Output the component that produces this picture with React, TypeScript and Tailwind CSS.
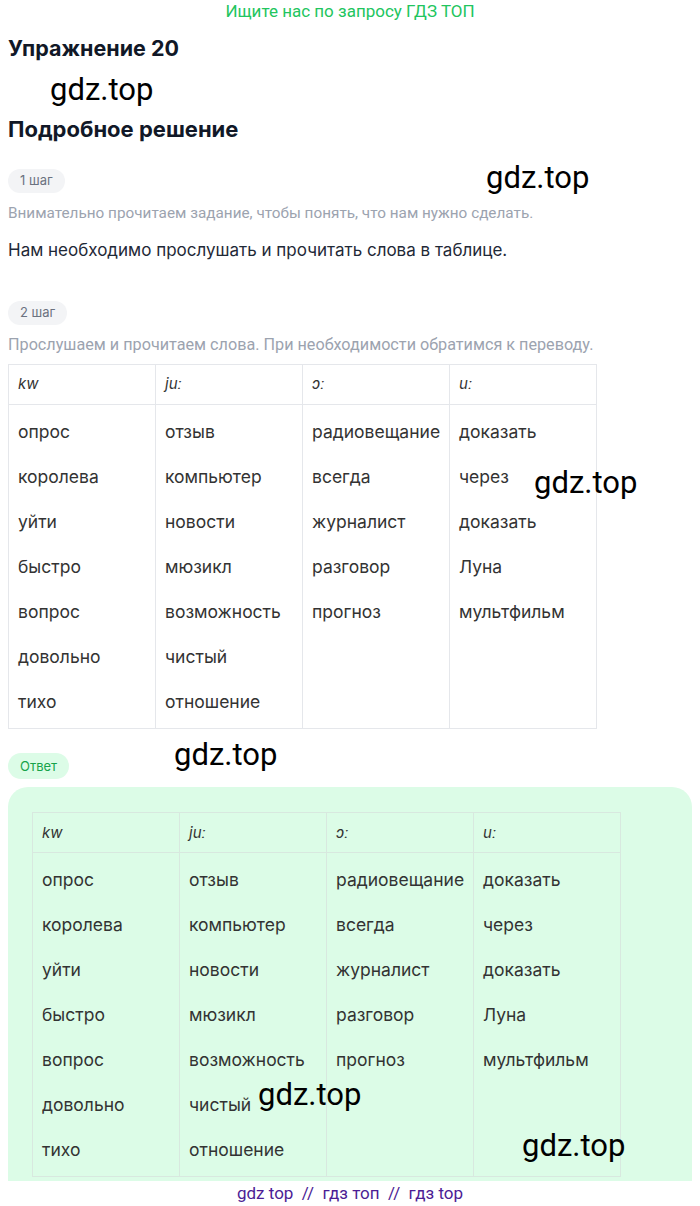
import React from 'react'

const cols = [
  { head: 'kw', words: ['опрос', 'королева', 'уйти', 'быстро', 'вопрос', 'довольно', 'тихо'] },
  { head: 'juː', words: ['отзыв', 'компьютер', 'новости', 'мюзикл', 'возможность', 'чистый', 'отношение'] },
  { head: 'ɔː', words: ['радиовещание', 'всегда', 'журналист', 'разговор', 'прогноз'] },
  { head: 'uː', words: ['доказать', 'через', 'доказать', 'Луна', 'мультфильм'] },
]

const WordTable = ({ border }: { border: string }) => {
  return (
    <table className={`w-[589px] table-fixed border-collapse text-[17.5px] text-[#333] ${border}`}>
      <thead>
        <tr>
          {cols.map((c, i) => (
            <th key={i} className={`h-10 border px-[9px] text-left font-normal italic text-[15px] ${border}`}>
              {c.head}
            </th>
          ))}
        </tr>
      </thead>
      <tbody>
        <tr>
          {cols.map((c, i) => (
            <td key={i} className={`border px-[9px] py-1 align-top leading-[45px] ${border}`}>
              {c.words.map((w, j) => (
                <p key={j}>{w}</p>
              ))}
            </td>
          ))}
        </tr>
      </tbody>
    </table>
  )
}

const Step = ({ label }: { label: string }) => (
  <span className="inline-flex h-6 items-center rounded-full bg-[#f3f4f6] px-3 text-[13px] text-[#6b7280]">{label}</span>
)

const Mark = ({ className }: { className: string }) => (
  <span className={`absolute font-['Roboto'] text-[31px] leading-none text-black ${className}`}>gdz.top</span>
)

export default function App() {
  return (
    <div className="relative w-[700px] bg-white font-['Inter',sans-serif]">
      <p className="h-[22px] text-center font-['Roboto'] text-[17px] leading-[22px] text-[#22c55e]">
        Ищите нас по запросу ГДЗ ТОП
      </p>

      <div className="px-2">
        <h1 className="mt-3 text-[21.5px] font-bold leading-7 text-[#111827]">Упражнение 20</h1>
        <h2 className="mt-[53px] text-[22px] font-bold leading-7 text-[#111827]">Подробное решение</h2>

        <div className="mt-6">
          <Step label="1 шаг" />
        </div>
        <p className="mt-[10px] font-['Roboto'] text-[15.3px] leading-5 text-[#9ca3af]">
          Внимательно прочитаем задание, чтобы понять, что нам нужно сделать.
        </p>
        <p className="mt-[15px] text-[17px] leading-6 text-[#1f2937]">
          Нам необходимо прослушать и прочитать слова в таблице.
        </p>

        <div className="mt-[37px]">
          <Step label="2 шаг" />
        </div>
        <p className="mt-[10px] font-['Roboto'] text-[16.2px] leading-5 text-[#9ca3af]">
          Прослушаем и прочитаем слова. При необходимости обратимся к переводу.
        </p>

        <div className="mt-[9px]">
          <WordTable border="border-[#e5e7eb]" />
        </div>

        <div className="mt-6">
          <span className="inline-flex h-[26px] items-center rounded-full bg-[#dcfce7] px-3 text-[13px] text-[#16a34a]">
            Ответ
          </span>
        </div>

        <div className="mt-2 rounded-t-[20px] bg-[#dcfce7] pb-1 pl-6 pt-[25px]">
          <WordTable border="border-[#d8e8df]" />
        </div>
      </div>

      <p className="text-center font-['Roboto'] text-[17px] leading-6 text-[#4c1d95]">
        gdz top&nbsp; //&nbsp; гдз топ&nbsp; //&nbsp; гдз top
      </p>

      <Mark className="left-[50px] top-[74px]" />
      <Mark className="left-[486px] top-[162px]" />
      <Mark className="left-[534px] top-[467px]" />
      <Mark className="left-[174px] top-[739px]" />
      <Mark className="left-[258px] top-[1079px]" />
      <Mark className="left-[522px] top-[1130px]" />
    </div>
  )
}
